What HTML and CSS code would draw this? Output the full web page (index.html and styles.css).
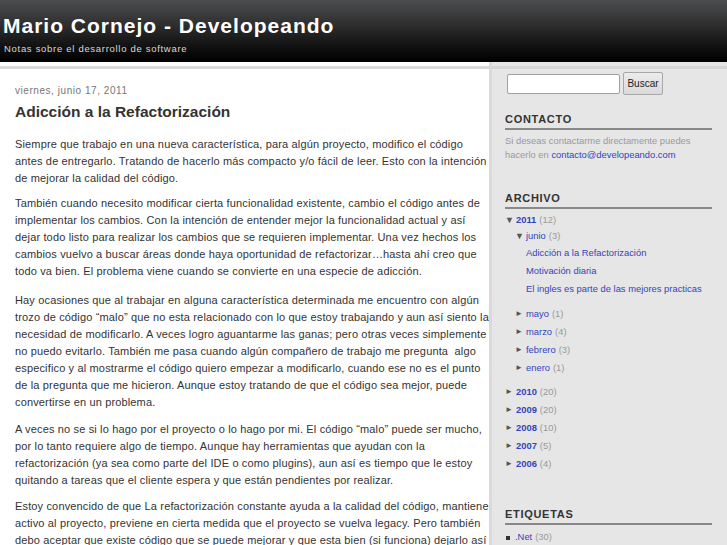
FILE: index.html
```html
<!DOCTYPE html>
<html lang="es">
<head>
<meta charset="utf-8">
<title>Mario Cornejo - Developeando</title>
<link rel="stylesheet" href="styles.css">
</head>
<body>
<header class="header">
  <h1 class="site-title">Mario Cornejo - Developeando</h1>
  <p class="site-desc">Notas sobre el desarrollo de software</p>
</header>
<div class="wrap">
  <main class="main">
    <div class="date">viernes, junio 17, 2011</div>
    <h2 class="post-title">Adicción a la Refactorización</h2>
    <div class="post-body">
      <p class="p1">Siempre que trabajo en una nueva característica, para algún proyecto, modifico el código<br>antes de entregarlo. Tratando de hacerlo más compacto y/o fácil de leer. Esto con la intención<br>de mejorar la calidad del código.</p>
      <p class="p2">También cuando necesito modificar cierta funcionalidad existente, cambio el código antes de<br>implementar los cambios. Con la intención de entender mejor la funcionalidad actual y así<br>dejar todo listo para realizar los cambios que se requieren implementar. Una vez hechos los<br>cambios vuelvo a buscar áreas donde haya oportunidad de refactorizar…hasta ahí creo que<br>todo va bien. El problema viene cuando se convierte en una especie de adicción.</p>
      <p class="p3">Hay ocasiones que al trabajar en alguna característica determinada me encuentro con algún<br>trozo de código “malo” que no esta relacionado con lo que estoy trabajando y aun así siento la<br>necesidad de modificarlo. A veces logro aguantarme las ganas; pero otras veces simplemente<br>no puedo evitarlo. También me pasa cuando algún compañero de trabajo me pregunta&nbsp; algo<br>especifico y al mostrarme el código quiero empezar a modificarlo, cuando ese no es el punto<br>de la pregunta que me hicieron. Aunque estoy tratando de que el código sea mejor, puede<br>convertirse en un problema.</p>
      <p class="p4">A veces no se si lo hago por el proyecto o lo hago por mi. El código “malo” puede ser mucho,<br>por lo tanto requiere algo de tiempo. Aunque hay herramientas que ayudan con la<br>refactorización (ya sea como parte del IDE o como plugins), aun así es tiempo que le estoy<br>quitando a tareas que el cliente espera y que están pendientes por realizar.</p>
      <p class="p5">Estoy convencido de que La refactorización constante ayuda a la calidad del código, mantiene<br>activo al proyecto, previene en cierta medida que el proyecto se vuelva legacy. Pero también<br>debo aceptar que existe código que se puede mejorar y que esta bien (si funciona) dejarlo así</p>
    </div>
  </main>
  <aside class="sidebar">
    <form class="search">
      <input class="search-input" type="text">
      <button class="search-btn" type="button">Buscar</button>
    </form>

    <section class="widget contact">
      <h3 class="widget-title">Contacto</h3>
      <p class="contact-text">Si deseas contactarme directamente puedes<br>hacerlo en <a href="#" class="link">contacto@developeando.com</a></p>
    </section>

    <section class="widget archive">
      <h3 class="widget-title">Archivo</h3>
      <ul class="tree">
        <li class="row tight"><span class="tog">▼</span><a href="#" class="link year">2011</a> <span class="count">(12)</span></li>
        <li class="row tight sub"><span class="tog">▼</span><a href="#" class="link">junio</a> <span class="count">(3)</span></li>
        <li class="row post"><a href="#" class="link">Adicción a la Refactorización</a></li>
        <li class="row post"><a href="#" class="link">Motivación diaria</a></li>
        <li class="row post last-post"><a href="#" class="link">El ingles es parte de las mejores practicas</a></li>
        <li class="row sub"><span class="tog small">►</span><a href="#" class="link">mayo</a> <span class="count">(1)</span></li>
        <li class="row sub"><span class="tog small">►</span><a href="#" class="link">marzo</a> <span class="count">(4)</span></li>
        <li class="row sub"><span class="tog small">►</span><a href="#" class="link">febrero</a> <span class="count">(3)</span></li>
        <li class="row sub"><span class="tog small">►</span><a href="#" class="link">enero</a> <span class="count">(1)</span></li>
        <li class="row yr first-yr"><span class="tog small">►</span><a href="#" class="link year">2010</a> <span class="count">(20)</span></li>
        <li class="row yr"><span class="tog small">►</span><a href="#" class="link year">2009</a> <span class="count">(20)</span></li>
        <li class="row yr"><span class="tog small">►</span><a href="#" class="link year">2008</a> <span class="count">(10)</span></li>
        <li class="row yr"><span class="tog small">►</span><a href="#" class="link year">2007</a> <span class="count">(5)</span></li>
        <li class="row yr"><span class="tog small">►</span><a href="#" class="link year">2006</a> <span class="count">(4)</span></li>
      </ul>
    </section>

    <section class="widget labels">
      <h3 class="widget-title">Etiquetas</h3>
      <ul class="label-list">
        <li class="label-item"><span class="bullet"></span><a href="#" class="link">.Net</a> <span class="count">(30)</span></li>
      </ul>
    </section>
  </aside>
</div>
</body>
</html>
```

FILE: styles.css
```css
html, body {
  margin: 0;
  padding: 0;
  background: #fff;
  font-family: "Liberation Sans", Arial, sans-serif;
  overflow: hidden;
}

.header {
  height: 62px;
  background: linear-gradient(to bottom, #4c4d4f 0%, #2e2e2f 40%, #111 75%, #000 100%);
  padding: 0 0 0 3px;
  box-sizing: border-box;
  color: #fff;
}

.site-title {
  margin: 0;
  padding-top: 14px;
  font-size: 21px;
  line-height: 24px;
  font-weight: bold;
  letter-spacing: 1px;
}

.site-desc {
  margin: 5px 0 0 1px;
  font-size: 9.5px;
  line-height: 12px;
  letter-spacing: 0.7px;
  color: #d8d8d8;
}

.wrap {
  display: flex;
  min-height: 483px;
}

.main {
  width: 492px;
  flex: none;
  box-sizing: border-box;
  border-right: 3px solid #dadada;
  background: #fff linear-gradient(to bottom, transparent 4px, #d9d9d9 4px, #d9d9d9 7px, transparent 7px) no-repeat;
  padding: 23px 0 0 15px;
  color: #333;
}

.date {
  font-size: 10px;
  line-height: 12px;
  letter-spacing: 0.55px;
  color: #777;
}

.post-title {
  margin: 5px 0 0;
  font-size: 15.5px;
  line-height: 20px;
  font-weight: bold;
  color: #333;
}

.post-body {
  margin-top: 14px;
  font-size: 11px;
  line-height: 17px;
  letter-spacing: 0.15px;
  white-space: nowrap;
}

.post-body p {
  margin: 0;
}

.post-body .p2 { margin-top: 8px; }
.post-body .p3 { margin-top: 12px; }
.post-body .p4 { margin-top: 10px; }
.post-body .p5 { margin-top: 9px; }

.sidebar {
  flex: 1;
  background: #e6e6e6 linear-gradient(to bottom, transparent 4px, #d6d6d6 4px, #d6d6d6 7px, transparent 7px) no-repeat;
  padding: 10px 15px 0 13px;
  color: #999;
  font-size: 9.4px;
}

.search {
  display: flex;
  align-items: center;
  gap: 3px;
  margin: 0 0 0 2px;
}

.search-input {
  width: 113px;
  height: 20px;
  box-sizing: border-box;
  border: 1px solid #a0a0a0;
  border-radius: 2px;
  background: #fff;
  padding: 0;
  margin: 0;
}

.search-btn {
  width: 40px;
  height: 23px;
  box-sizing: border-box;
  border: 1px solid #a8a8a8;
  border-radius: 2px;
  background: linear-gradient(#ececec, #d9d9d9);
  font-family: "Liberation Sans", Arial, sans-serif;
  font-size: 10px;
  color: #222;
  padding: 0;
  margin: 0;
}

.widget-title {
  margin: 0;
  font-size: 11px;
  line-height: 14px;
  font-weight: bold;
  letter-spacing: 0.7px;
  text-transform: uppercase;
  color: #333;
  padding-bottom: 2px;
  border-bottom: 2px solid #888;
}

.contact { margin-top: 17px; }

.contact-text {
  margin: 4px 0 0;
  line-height: 14px;
  color: #999;
}

.link {
  color: #3344bb;
  text-decoration: none;
}

.archive { margin-top: 29px; }

.tree {
  list-style: none;
  margin: 3px 0 0;
  padding: 0;
}

.row {
  line-height: 18px;
  display: flex;
  align-items: center;
  white-space: nowrap;
}

.row.tight { line-height: 16px; }

.count { margin-left: 3px; }

.tog {
  width: 11px;
  flex: none;
  font-size: 9px;
  color: #555;
}

.tog.small { font-size: 8px; }

.year { font-weight: bold; }

.sub { padding-left: 10px; }
.post { padding-left: 21px; }
.last-post { margin-bottom: 7px; }
.first-yr { margin-top: 6px; }

.labels { margin-top: 34px; }

.label-list {
  list-style: none;
  margin: 4px 0 0;
  padding: 0;
}

.label-item {
  line-height: 16px;
  display: flex;
  align-items: center;
}

.bullet {
  width: 4px;
  height: 4px;
  background: #333;
  margin: 2px 5px 0 1px;
}
```
